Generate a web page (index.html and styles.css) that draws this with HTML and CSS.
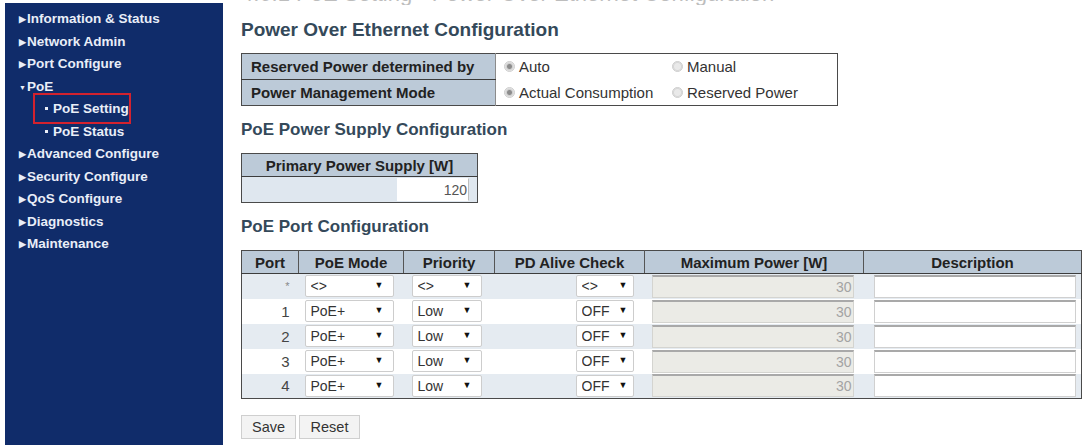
FILE: index.html
```html
<!DOCTYPE html>
<html lang="en">
  <head>
    <meta charset="UTF-8" />
    <meta name="viewport" content="width=device-width, initial-scale=1.0" />
    <title>PoE Setting</title>
    <link rel="stylesheet" href="styles.css">
  </head>
  <body>
    <div class="page">
      <nav class="sidebar">
        <ul class="menu">
          <li><span class="arrow">&#9654;</span>Information &amp; Status</li>
          <li><span class="arrow">&#9654;</span>Network Admin</li>
          <li><span class="arrow">&#9654;</span>Port Configure</li>
          <li><span class="arrow down">&#9660;</span>PoE</li>
          <li class="sub"><span class="current"><span class="dot"></span>PoE Setting</span></li>
          <li class="sub"><span class="dot"></span>PoE Status</li>
          <li><span class="arrow">&#9654;</span>Advanced Configure</li>
          <li><span class="arrow">&#9654;</span>Security Configure</li>
          <li><span class="arrow">&#9654;</span>QoS Configure</li>
          <li><span class="arrow">&#9654;</span>Diagnostics</li>
          <li><span class="arrow">&#9654;</span>Maintenance</li>
        </ul>
      </nav>

      <main class="content">
        <div class="doc-caption">4.6.1 PoE Setting - Power Over Ethernet Configuration</div>

        <h1 class="title">Power Over Ethernet Configuration</h1>
        <table class="cfg mode-table">
          <tr>
            <th>Reserved Power determined by</th>
            <td class="opt1"><label><input type="radio" name="reserved" checked> Auto</label></td>
            <td><label><input type="radio" name="reserved"> Manual</label></td>
          </tr>
          <tr>
            <th>Power Management Mode</th>
            <td class="opt1"><label><input type="radio" name="mgmt" checked> Actual Consumption</label></td>
            <td><label><input type="radio" name="mgmt"> Reserved Power</label></td>
          </tr>
        </table>

        <h2 class="section">PoE Power Supply Configuration</h2>
        <table class="cfg supply-table">
          <tr><th>Primary Power Supply [W]</th></tr>
          <tr><td><input class="txt supply" type="text" value="120"></td></tr>
        </table>

        <h2 class="section">PoE Port Configuration</h2>
        <table class="cfg port-table">
          <thead>
            <tr>
              <th class="c-port">Port</th>
              <th class="c-mode">PoE Mode</th>
              <th class="c-prio">Priority</th>
              <th class="c-alive">PD Alive Check</th>
              <th class="c-max">Maximum Power [W]</th>
              <th class="c-desc">Description</th>
            </tr>
          </thead>
          <tbody>
            <tr class="alt">
              <td class="port">*</td>
              <td><span class="sel s-mode"><select><option>&lt;&gt;</option></select></span></td>
              <td><span class="sel s-prio"><select><option>&lt;&gt;</option></select></span></td>
              <td class="alive"><span class="sel s-alive"><select><option>&lt;&gt;</option></select></span></td>
              <td><input class="txt max" type="text" value="30" disabled></td>
              <td><input class="txt desc" type="text"></td>
            </tr>
            <tr>
              <td class="port">1</td>
              <td><span class="sel s-mode"><select><option>PoE+</option></select></span></td>
              <td><span class="sel s-prio"><select><option>Low</option></select></span></td>
              <td class="alive"><span class="sel s-alive"><select><option>OFF</option></select></span></td>
              <td><input class="txt max" type="text" value="30" disabled></td>
              <td><input class="txt desc" type="text"></td>
            </tr>
            <tr class="alt">
              <td class="port">2</td>
              <td><span class="sel s-mode"><select><option>PoE+</option></select></span></td>
              <td><span class="sel s-prio"><select><option>Low</option></select></span></td>
              <td class="alive"><span class="sel s-alive"><select><option>OFF</option></select></span></td>
              <td><input class="txt max" type="text" value="30" disabled></td>
              <td><input class="txt desc" type="text"></td>
            </tr>
            <tr>
              <td class="port">3</td>
              <td><span class="sel s-mode"><select><option>PoE+</option></select></span></td>
              <td><span class="sel s-prio"><select><option>Low</option></select></span></td>
              <td class="alive"><span class="sel s-alive"><select><option>OFF</option></select></span></td>
              <td><input class="txt max" type="text" value="30" disabled></td>
              <td><input class="txt desc" type="text"></td>
            </tr>
            <tr class="alt">
              <td class="port">4</td>
              <td><span class="sel s-mode"><select><option>PoE+</option></select></span></td>
              <td><span class="sel s-prio"><select><option>Low</option></select></span></td>
              <td class="alive"><span class="sel s-alive"><select><option>OFF</option></select></span></td>
              <td><input class="txt max" type="text" value="30" disabled></td>
              <td><input class="txt desc" type="text"></td>
            </tr>
          </tbody>
        </table>

        <div class="buttons">
          <button class="btn btn-save">Save</button>
          <button class="btn btn-reset">Reset</button>
        </div>
      </main>
    </div>
  </body>
</html>
```

FILE: styles.css
```css
body {
  margin: 0;
  padding: 0;
  background: #fff;
  font-family: "Liberation Sans", Arial, sans-serif;
  color: #333;
}

.page {
  display: flex;
  height: 445px;
  overflow: hidden;
}

/* left menu */
.sidebar {
  flex: none;
  width: 218px;
  margin: 3px 0 0 5px;
  background: #102c6a;
}

.menu {
  list-style: none;
  margin: 0;
  padding: 5px 0 0 14px;
}

.menu li {
  height: 22.5px;
  line-height: 22.5px;
  font-size: 13.5px;
  font-weight: bold;
  color: #e9eef8;
  white-space: nowrap;
}

.arrow {
  display: inline-block;
  width: 8px;
  font-size: 9px;
  vertical-align: 1px;
}

.arrow.down {
  font-size: 7px;
}

.menu li.sub {
  padding-left: 26px;
}

.dot {
  display: inline-block;
  width: 3px;
  height: 3px;
  background: #e9eef8;
  margin-right: 5px;
  vertical-align: 3px;
}

.current {
  padding: 6px 0 6px 10px;
  margin-left: -10px;
  outline: 2px solid #d3222e;
}

/* right content */
.content {
  flex: 1;
  padding-left: 18px;
  min-width: 0;
}

.doc-caption {
  margin-top: -17px;
  height: 22px;
  line-height: 22px;
  font-size: 22px;
  color: #bdbdbd;
  white-space: nowrap;
  overflow: hidden;
}

.title,
.section {
  margin: 0;
  height: 20px;
  line-height: 20px;
  font-weight: bold;
  color: #34495a;
}

.title {
  font-size: 19px;
  margin-top: 15px;
  margin-bottom: 13px;
}

.section {
  font-size: 17px;
  margin-top: 14px;
  margin-bottom: 13px;
}

.cfg {
  border-collapse: collapse;
  border: 1px solid #4a4a4a;
  font-size: 15px;
}

.cfg th {
  background: #bccad8;
  color: #222;
  font-weight: bold;
  padding: 0;
  white-space: nowrap;
}

.cfg td {
  padding: 0;
  white-space: nowrap;
}

/* mode table */
.mode-table {
  width: 597px;
}

.mode-table tr {
  height: 26px;
}

.mode-table th {
  width: 244px;
  text-align: left;
  padding-left: 9px;
  border-bottom: 1px solid #3c3c3c;
  border-right: 1px solid #8b8b8b;
}

.mode-table tr:last-child th {
  border-bottom: none;
}

.mode-table td {
  color: #333;
}

.mode-table td.opt1 {
  width: 168px;
  padding-left: 8px;
}

.mode-table label {
  display: inline-flex;
  align-items: center;
  gap: 4px;
}

input[type="radio"] {
  appearance: none;
  -webkit-appearance: none;
  margin: 0;
  width: 11px;
  height: 11px;
  border-radius: 50%;
  border: 1px solid #cfcfcf;
  background: radial-gradient(circle, #e9e9e9 0 3px, #d6d6d6 4px, #efefef 5px);
}

input[type="radio"]:checked {
  background: radial-gradient(circle, #8c8c8c 0 2px, #cfcfcf 3px, #eeeeee 5px);
}

/* supply table */
.supply-table {
  width: 237px;
}

.supply-table th {
  height: 22px;
  border-bottom: 1px solid #3c3c3c;
}

.supply-table td {
  height: 25px;
  background: #dfe7ef;
  text-align: right;
  padding-right: 8px;
}

.txt {
  font-family: "Liberation Sans", Arial, sans-serif;
  font-size: 14px;
  box-sizing: border-box;
  height: 23px;
  margin: 0;
  padding: 0 1px 0 4px;
  border: 1px solid #cfcfcf;
  border-top-color: #a9a9a9;
  background: #fff;
  color: #555;
  vertical-align: middle;
}

.txt.supply {
  width: 72px;
  text-align: right;
  border-color: #fff;
  border-right-color: #bdbdbd;
}

/* port table */
.port-table {
  width: 841px;
  table-layout: fixed;
}

.port-table th {
  height: 22px;
  border-bottom: 1px solid #3c3c3c;
  border-right: 1px solid #555;
  text-align: center;
}

.port-table th:last-child {
  border-right: none;
}

.c-port { width: 56px; }
.c-mode { width: 104px; }
.c-prio { width: 90px; }
.c-alive { width: 149px; }
.c-max { width: 218px; }
.c-desc { width: auto; }

.port-table tbody tr {
  height: 25px;
  background: #fff;
}

.port-table tbody tr.alt {
  background: #e5ebf1;
}

.port-table td.port {
  text-align: right;
  padding-right: 9px;
  color: #444;
}

.port-table tbody tr:first-child td.port {
  font-size: 11px;
  color: #888;
}

.port-table td:nth-child(2) {
  padding-left: 6px;
}

.port-table td:nth-child(3) {
  padding-left: 8px;
}

.port-table td.alive {
  text-align: right;
  padding-right: 11px;
}

.port-table td:nth-child(5) {
  padding-left: 7px;
}

.port-table td:nth-child(6) {
  padding-left: 10px;
}

.sel {
  position: relative;
  display: inline-block;
  vertical-align: middle;
}

.sel select {
  appearance: none;
  -webkit-appearance: none;
  box-sizing: border-box;
  height: 22px;
  margin: 0;
  padding: 0 0 0 5px;
  border: 1px solid #cdcdcd;
  border-radius: 2px;
  background: #fff;
  font-family: "Liberation Sans", Arial, sans-serif;
  font-size: 14px;
  color: #333;
  width: 100%;
}

.sel::after {
  content: "\25BC";
  position: absolute;
  right: 10px;
  top: 5px;
  font-size: 9px;
  color: #111;
  pointer-events: none;
}

.s-mode { width: 89px; }
.s-prio { width: 70px; }
.s-alive { width: 58px; }
.s-alive::after { right: 6px; }

.txt.max {
  width: 202px;
  background: #ebebe6;
  color: #a3a3a3;
  text-align: right;
  border: 1px solid #d4d4d0;
  border-top: 2px solid #a9a9a9;
}

.txt.desc {
  width: 202px;
  border: 1px solid #d0d0d0;
  border-top: 2px solid #a9a9a9;
}

/* buttons */
.buttons {
  display: flex;
  gap: 3px;
  margin-top: 16px;
}

.btn {
  height: 24px;
  padding: 0;
  border: 1px solid #cfcfcf;
  background: #f3f3f3;
  font-family: "Liberation Sans", Arial, sans-serif;
  font-size: 14.5px;
  color: #333;
}

.btn-save { width: 55px; }
.btn-reset { width: 61px; }
```
